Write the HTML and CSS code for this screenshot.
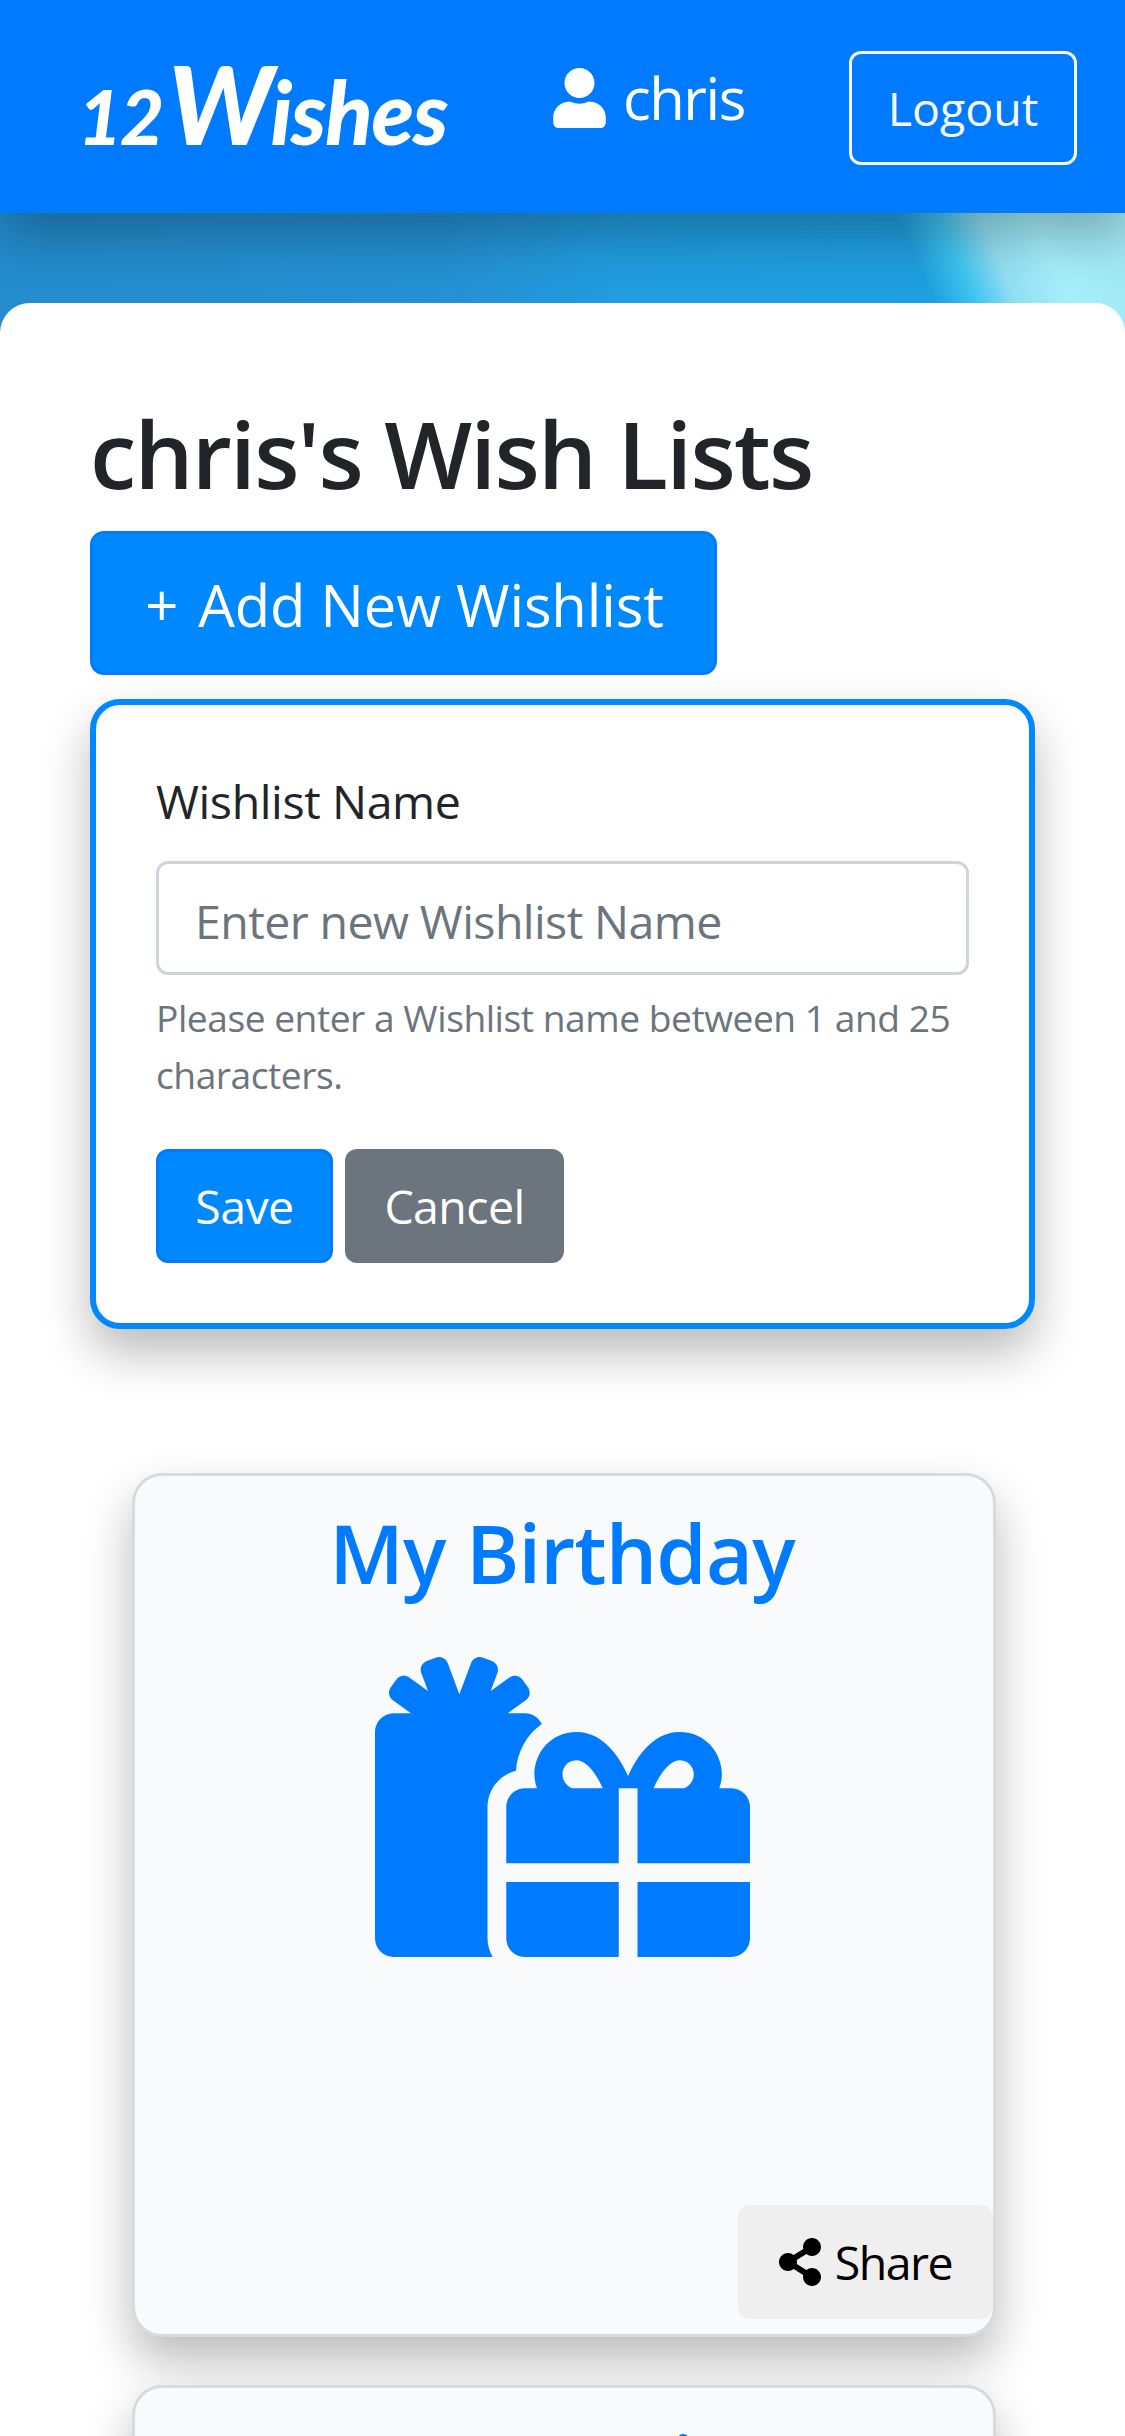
FILE: index.html
```html
<!DOCTYPE html>
<html lang="en">
<head>
<meta charset="utf-8">
<title>12Wishes</title>
<link rel="stylesheet" href="styles.css">
</head>
<body>
<header class="navbar">
  <a class="brand"><span class="brand-num">12</span><span class="brand-cap">W</span>ishes</a>
  <div class="user">
    <svg class="user-icon" viewBox="0 0 448 512"><path fill="currentColor" d="M224 256c70.7 0 128-57.3 128-128S294.7 0 224 0 96 57.3 96 128s57.3 128 128 128zm89.6 32h-16.7c-22.2 10.2-46.9 16-72.9 16s-50.6-5.8-72.9-16h-16.7C60.2 288 0 348.2 0 422.4V464c0 26.5 21.5 48 48 48h352c26.5 0 48-21.5 48-48v-41.6c0-74.2-60.2-134.4-134.4-134.4z"/></svg>
    <span class="user-name">chris</span>
  </div>
  <button class="btn btn-outline">Logout</button>
</header>
<div class="hero">
  <main class="panel">
    <h1 class="heading">chris's Wish Lists</h1>
    <button class="btn btn-primary btn-lg"><span>+</span><span>Add New Wishlist</span></button>
    <form class="form-card">
      <label class="label" for="name">Wishlist Name</label>
      <input class="input" id="name" type="text" placeholder="Enter new Wishlist Name">
      <p class="help">Please enter a Wishlist name between 1 and 25 characters.</p>
      <div class="actions">
        <button class="btn btn-primary btn-save" type="button">Save</button>
        <button class="btn btn-secondary" type="button">Cancel</button>
      </div>
    </form>
    <section class="lists">
      <article class="card">
        <h2 class="card-title">My Birthday</h2>
        <svg class="gifts" viewBox="0 0 640 512"><path fill="currentColor" d="M240.6 194.1c1.9-30.8 17.3-61.2 44-79.8C279.4 103.5 268.7 96 256 96h-29.4l30.7-22c7.2-5.1 8.9-15.1 3.7-22.3l-9.3-13c-5.1-7.2-15.1-8.9-22.3-3.7l-32 22.9 11.5-30.6c3.1-8.3-1.1-17.5-9.4-20.6l-15-5.6c-8.3-3.1-17.5 1.1-20.6 9.4l-19.9 53-19.9-53.1C120.9 2.2 111.7-2 103.4 1.1l-15 5.6C80.1 9.8 75.9 19 79 27.3l11.5 30.6-32-22.9c-7.2-5.1-17.2-3.5-22.3 3.7l-9.3 13c-5.1 7.2-3.5 17.2 3.7 22.3l30.7 22H32c-17.7 0-32 14.3-32 32v352c0 17.7 14.3 32 32 32h168.9c-5.5-9.5-8.9-20.3-8.9-32V256c0-29.9 20.8-55 48.6-61.9zM224 480c0 17.7 14.3 32 32 32h160V384H224v96zm224 32h160c17.7 0 32-14.3 32-32v-96H448v128zm160-288h-20.4c2.6-7.6 4.4-15.5 4.4-23.8 0-35.5-27-72.2-72.1-72.2-48.1 0-75.9 47.7-87.9 75.3-12.1-27.6-39.9-75.3-87.9-75.3-45.1 0-72.1 36.7-72.1 72.2 0 8.3 1.7 16.2 4.4 23.8H256c-17.7 0-32 14.3-32 32v96h192V224h15.3l.7-.2.7.2H448v128h192v-96c0-17.7-14.3-32-32-32zm-272 0c-2.7-1.4-5.1-3-7.2-4.8-7.3-6.4-8.8-13.8-8.8-19 0-9.7 6.4-24.2 24.1-24.2 18.7 0 35.6 27.4 44.5 48H336zm199.2-4.8c-2.1 1.8-4.5 3.4-7.2 4.8h-52.6c8.8-20.3 25.8-48 44.5-48 17.7 0 24.1 14.5 24.1 24.2 0 5.2-1.5 12.6-8.8 19z"/></svg>
        <button class="btn btn-share"><svg class="share-icon" viewBox="0 0 448 512"><path fill="currentColor" d="M352 320c-22.608 0-43.387 7.819-59.79 20.895l-102.486-64.054a96.551 96.551 0 0 0 0-41.683l102.486-64.054C308.613 184.181 329.392 192 352 192c53.019 0 96-42.981 96-96S405.019 0 352 0s-96 42.981-96 96c0 7.158.79 14.13 2.276 20.841L155.79 180.895C139.387 167.819 118.608 160 96 160c-53.019 0-96 42.981-96 96s42.981 96 96 96c22.608 0 43.387-7.819 59.79-20.895l102.486 64.054A96.301 96.301 0 0 0 256 416c0 53.019 42.981 96 96 96s96-42.981 96-96-42.981-96-96-96z"/></svg>Share</button>
      </article>
      <article class="card">
        <h2 class="card-title card-title-next">Game List</h2>
      </article>
    </section>
  </main>
</div>
</body>
</html>
```
FILE: styles.css
```css
* { box-sizing: border-box; }
html, body { height: 2436px; overflow: hidden; }
body {
  margin: 0;
  background: #fff;
  color: #212529;
  font-family: "Open Sans", "Noto Sans", sans-serif;
  font-stretch: 94%;
  font-size: 46.5px;
  line-height: 72px;
}
h1, h2, p { margin: 0; }

.navbar {
  position: relative;
  z-index: 1;
  height: 213px;
  padding: 51px 48px 48px 78px;
  display: flex;
  align-items: flex-start;
  background: #007bff;
  color: #fff;
  box-shadow: 0 24px 48px rgba(0, 0, 0, .27);
}
.brand {
  width: 475px;
  line-height: 104px;
  font-family: Lato, sans-serif;
  font-size: 87px;
  font-weight: 900;
  font-style: italic;
  letter-spacing: -1.2px;
  white-space: nowrap;
}
.brand-num { font-size: 76px; letter-spacing: -2px; margin-right: 6px; }
.brand-cap { font-size: 108px; letter-spacing: -3px; }
.user { width: 296px; height: 93px; display: flex; align-items: center; gap: 17px; }
.user-icon { width: 53px; height: 60px; }
.user-name { font-size: 58px; letter-spacing: -1.5px; }

.btn {
  height: 114px;
  border: 3px solid transparent;
  border-radius: 12px;
  padding: 0 36px;
  font: inherit;
  font-stretch: inherit;
  white-space: nowrap;
  display: inline-flex;
  align-items: center;
  justify-content: center;
}
.btn-outline { width: 228px; background: transparent; border-color: #f8f9fa; color: #f8f9fa; }
.btn-primary { background: #08f; border-color: #007bff; color: #fff; }
.btn-secondary { width: 219px; background: #6c757d; color: #fff; letter-spacing: -.6px; }
.btn-save { width: 177px; letter-spacing: -.6px; }
.btn-lg { width: 627px; height: 144px; border-radius: 14px; font-size: 58px; padding: 3px 0 0 2px; gap: 20px; letter-spacing: -.15px; }

.hero {
  padding-top: 90px;
  background:
    linear-gradient(66deg, rgba(63, 196, 240, 0) 80.5%, #3fc4f0 84%, #93dff3 87.5%, #a5effb 92%, #a0e6f2 100%) no-repeat 0 0 / 100% 120px,
    linear-gradient(90deg, #248ccd 0, #2590d2 40%, #219de0 55%, #1f9fdf 80%, #1ea0e4 100%) no-repeat 0 0 / 100% 120px;
}
.panel {
  min-height: 2133px;
  padding: 92px 90px 0;
  border-radius: 30px 30px 0 0;
  background: #fff;
  display: flex;
  flex-direction: column;
  align-items: flex-start;
}
.heading { font-size: 93px; font-weight: 600; line-height: 117px; margin-bottom: 19px; letter-spacing: -1.8px; white-space: nowrap; }

.form-card {
  width: 945px;
  height: 630px;
  margin-top: 24px;
  padding: 60px;
  border: 6px solid #08f;
  border-radius: 30px;
  background: #fff;
  box-shadow: 0 24px 48px rgba(0, 0, 0, .27);
  display: flex;
  flex-direction: column;
}
.label { margin-bottom: 24px; letter-spacing: -.4px; }
.input {
  width: 813px;
  height: 114px;
  padding: 6px 36px 0;
  border: 3px solid #ced4da;
  border-radius: 12px;
  font: inherit;
  font-stretch: inherit;
  letter-spacing: -.6px;
}
.input::placeholder { color: #6c757d; opacity: 1; }
.help { margin: 12px 0 46px; padding-top: 2px; height: 116px; width: 813px; font-size: 37.2px; line-height: 57px; letter-spacing: -.48px; color: #6c757d; }
.actions { display: flex; gap: 12px; }

.lists { width: 864px; margin: 144px 0 0 42px; display: flex; flex-direction: column; gap: 48px; }
.card {
  height: 864px;
  padding: 26px 0 15px;
  border: 3px solid #d9dadc;
  border-radius: 30px;
  background: #f8fafc;
  box-shadow: 0 24px 48px rgba(0, 0, 0, .27);
  color: #007bff;
  display: flex;
  flex-direction: column;
  align-items: center;
}
.card-title { font-size: 81px; font-weight: 600; line-height: 101px; margin: 0 4px 54px 0; letter-spacing: -.8px; white-space: nowrap; }
.card-title-next { margin: 0 0 54px 12px; letter-spacing: 1px; }
.gifts { width: 375px; height: 300px; margin-right: 3px; }
.btn-share { width: 255px; margin-top: auto; align-self: flex-end; background: #efefef; color: #000; gap: 14px; letter-spacing: -1.5px; }
.share-icon { width: 42px; height: 48px; flex-shrink: 0; }
```
